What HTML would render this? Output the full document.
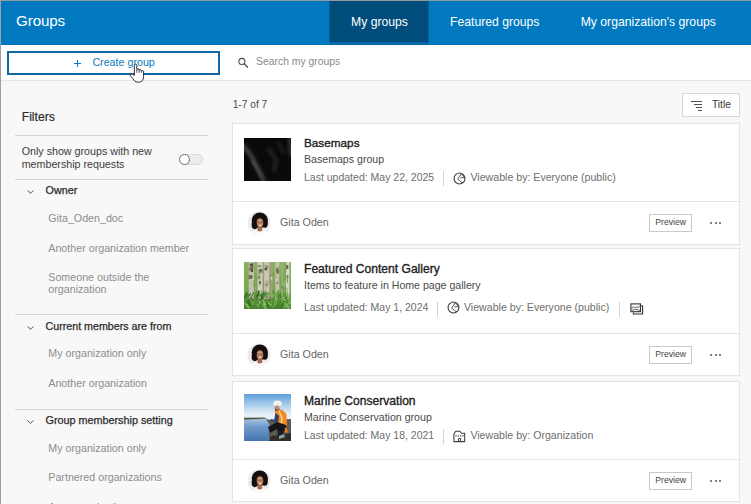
<!DOCTYPE html>
<html><head><meta charset="utf-8"><title>Groups</title>
<style>
*{box-sizing:border-box;margin:0;padding:0}
html,body{width:751px;height:504px;overflow:hidden;background:#f8f8f8}
#root{position:relative;width:751px;height:504px;overflow:hidden;background:#f8f8f8;font-family:"Liberation Sans",sans-serif}
.a{position:absolute;display:block}
.t{position:absolute;white-space:nowrap;line-height:1}
</style></head><body><div id="root">
<div class="a" style="left:0px;top:0px;width:751px;height:45px;background:#0079c1;"></div>
<div class="a" style="left:0px;top:44px;width:751px;height:1px;background:#0071b6;"></div>
<svg class="a" style="left:320px;top:0" width="120" height="45" viewBox="320 0 120 45"><rect x="329.4" y="0" width="99.1" height="42.2" fill="#004c7b"/><rect x="329.4" y="42.2" width="99.1" height="2.8" fill="#0068a9"/></svg>
<div class="a" style="left:0px;top:0px;width:751px;height:1px;background:#929ba2;"></div>
<div class="t" style="left:16px;top:13.13px;font-size:15.2px;color:#fff;letter-spacing:-0.12px;">Groups</div>
<div class="t" style="left:351px;top:15.67px;font-size:12.2px;color:#fff;">My groups</div>
<div class="t" style="left:450px;top:15.67px;font-size:12.2px;color:#fff;">Featured groups</div>
<div class="t" style="left:580.7px;top:15.67px;font-size:12.2px;color:#fff;">My organization's groups</div>
<div class="a" style="left:0px;top:45px;width:751px;height:35px;background:#fff;"></div>
<div class="a" style="left:0px;top:80px;width:751px;height:1px;background:#e6e6e6;"></div>
<div class="a" style="left:7px;top:51px;width:212.5px;height:24px;border:2px solid #1169a7;background:#fff"></div>
<div class="a" style="left:74px;top:63px;width:7px;height:1px;background:#0079c1;"></div>
<div class="a" style="left:77px;top:60px;width:1px;height:7px;background:#0079c1;"></div>
<div class="t" style="left:92.4px;top:56.84px;font-size:10.7px;color:#0a7ac2;">Create group</div>
<svg class="a" style="left:236px;top:56px" width="14" height="14" viewBox="236 56 14 14"><circle cx="241.9" cy="61.4" r="3.05" fill="none" stroke="#4a4a4a" stroke-width="1.05"/><path d="M244.2 63.8 L247.6 67.2" stroke="#4a4a4a" stroke-width="1.25" stroke-linecap="round"/></svg>
<div class="t" style="left:256px;top:56.80px;font-size:10.4px;color:#8a8a8a;">Search my groups</div>
<div class="t" style="left:21.7px;top:110.67px;font-size:12.2px;color:#2b2b2b;-webkit-text-stroke:0.2px #2b2b2b;">Filters</div>
<div class="a" style="left:15px;top:135px;width:193px;height:1px;background:#d6d6d6;"></div>
<div class="t" style="left:21.7px;top:146.34px;font-size:10.7px;color:#3c3c3c;">Only show groups with new</div>
<div class="t" style="left:21.7px;top:158.64px;font-size:10.7px;color:#3c3c3c;">membership requests</div>
<div class="a" style="left:179px;top:154px;width:24px;height:10.5px;border-radius:6px;background:#ececec;border:1px solid #d9d9d9"></div>
<div class="a" style="left:178.5px;top:153.5px;width:11.5px;height:11.5px;border-radius:6px;background:#fff;border:1.2px solid #6e6e6e"></div>
<div class="a" style="left:15px;top:179px;width:193px;height:1px;background:#d6d6d6;"></div>
<svg class="a" style="left:26px;top:189.3px" width="9" height="6" viewBox="0 0 9 6"><path d="M1.5 1.5 L4.5 4.3 L7.5 1.5" fill="none" stroke="#555" stroke-width="1"/></svg>
<div class="t" style="left:45.5px;top:185.36px;font-size:10.8px;color:#2b2b2b;-webkit-text-stroke:0.25px #2b2b2b;">Owner</div>
<div class="t" style="left:48.3px;top:213.34px;font-size:10.7px;color:#8d8d8d;">Gita_Oden_doc</div>
<div class="t" style="left:48.3px;top:243.24px;font-size:10.7px;color:#8d8d8d;">Another organization member</div>
<div class="t" style="left:48.3px;top:271.94px;font-size:10.7px;color:#8d8d8d;">Someone outside the</div>
<div class="t" style="left:48.3px;top:283.94px;font-size:10.7px;color:#8d8d8d;">organization</div>
<div class="a" style="left:15px;top:314px;width:193px;height:1px;background:#d6d6d6;"></div>
<svg class="a" style="left:26px;top:324.5px" width="9" height="6" viewBox="0 0 9 6"><path d="M1.5 1.5 L4.5 4.3 L7.5 1.5" fill="none" stroke="#555" stroke-width="1"/></svg>
<div class="t" style="left:45.5px;top:321.14px;font-size:10.7px;color:#2b2b2b;-webkit-text-stroke:0.25px #2b2b2b;">Current members are from</div>
<div class="t" style="left:48.3px;top:348.24px;font-size:10.7px;color:#8d8d8d;">My organization only</div>
<div class="t" style="left:48.3px;top:378.14px;font-size:10.7px;color:#8d8d8d;">Another organization</div>
<div class="a" style="left:15px;top:408.5px;width:193px;height:1px;background:#d6d6d6;"></div>
<svg class="a" style="left:26px;top:418.7px" width="9" height="6" viewBox="0 0 9 6"><path d="M1.5 1.5 L4.5 4.3 L7.5 1.5" fill="none" stroke="#555" stroke-width="1"/></svg>
<div class="t" style="left:45.5px;top:415.16px;font-size:10.8px;color:#2b2b2b;-webkit-text-stroke:0.25px #2b2b2b;">Group membership setting</div>
<div class="t" style="left:48.3px;top:442.64px;font-size:10.7px;color:#8d8d8d;">My organization only</div>
<div class="t" style="left:48.3px;top:471.94px;font-size:10.7px;color:#8d8d8d;">Partnered organizations</div>
<div class="t" style="left:48.3px;top:501.54px;font-size:10.7px;color:#8d8d8d;">Any organization</div>
<div class="t" style="left:232.7px;top:99.67px;font-size:10.2px;color:#4a4a4a;">1-7 of 7</div>
<div class="a" style="left:682px;top:93px;width:58px;height:23.5px;border:1px solid #d8d8d8;background:#fff"></div>
<div class="a" style="left:691px;top:100.5px;width:11px;height:1px;background:#4f4f4f;"></div>
<div class="a" style="left:694px;top:103.5px;width:8px;height:1px;background:#4f4f4f;"></div>
<div class="a" style="left:696.4px;top:106.5px;width:5.600000000000023px;height:1px;background:#4f4f4f;"></div>
<div class="a" style="left:698.3px;top:109.5px;width:3.7000000000000455px;height:1px;background:#4f4f4f;"></div>
<div class="t" style="left:712px;top:99.97px;font-size:10.2px;color:#333;">Title</div>
<div class="a" style="left:232px;top:123px;width:508px;height:122px;background:#fff;border:1px solid #e4e4e4;box-shadow:0 0 1px rgba(0,0,0,.05)"></div>
<div class="a" style="left:233px;top:201px;width:506px;height:1px;background:#e4e4e4;"></div>
<svg class="a" style="left:244px;top:138px" width="47" height="43" viewBox="0 0 47 43"><defs><filter id="f1" x="-20%" y="-20%" width="140%" height="140%"><feGaussianBlur stdDeviation="1.5"/></filter><filter id="f1b" x="-20%" y="-20%" width="140%" height="140%"><feGaussianBlur stdDeviation="0.8"/></filter><clipPath id="k1"><rect width="47" height="43"/></clipPath></defs><rect width="47" height="43" fill="#0a0a0a"/><g clip-path="url(#k1)" fill="none"><g filter="url(#f1)"><path d="M-1 7 L6 16 L12 27 L17 36 L20 44" stroke="#3d3d3d" stroke-width="4.5"/><path d="M45.5 -1 L46 8 L47 18" stroke="#383838" stroke-width="3"/><path d="M24 10 L32 22 L30 34" stroke="#1a1a1a" stroke-width="5"/><path d="M34 4 L40 16" stroke="#181818" stroke-width="4"/></g><g filter="url(#f1b)"><path d="M8 22 L13 31 L17 39" stroke="#575757" stroke-width="1.6"/><path d="M2 11 L7 19" stroke="#3a3a3a" stroke-width="1.2"/></g></g></svg>
<div class="t" style="left:304px;top:137.15px;font-size:11.75px;color:#222;-webkit-text-stroke:0.35px #222;">Basemaps</div>
<div class="t" style="left:304px;top:154.43px;font-size:10.6px;color:#4a4a4a;">Basemaps group</div>
<div class="t" style="left:304px;top:172.31px;font-size:10.5px;color:#6e6e6e;">Last updated: May 22, 2025</div>
<div class="a" style="left:443px;top:171px;width:1px;height:15px;background:#d2d2d2;"></div>
<svg class="a" style="left:452.5px;top:172.2px" width="13" height="13" viewBox="0 0 13 13"><circle cx="6.5" cy="6.5" r="5.45" fill="none" stroke="#3c3c3c" stroke-width="1.1"/><path d="M8.2 1.6 C7.2 3 7.4 3.6 6.6 4.6 C5.4 5.4 4.6 6.2 5.2 7.6 C5.8 8.8 7 8.6 7.6 9.4 C8 10.4 8.8 10.6 9.6 10.4 M8.2 1.6 C8.6 2.6 9.6 2.8 10 3.8 C10.8 4.2 11.4 4.6 11.6 5.2 M7.4 6 C8.6 5.4 10 5.6 11.6 6" fill="none" stroke="#3c3c3c" stroke-width="1"/></svg>
<div class="t" style="left:470.5px;top:172.23px;font-size:10.6px;color:#6e6e6e;">Viewable by: Everyone (public)</div>
<svg class="a" style="left:245.60000000000002px;top:209.5px" width="26" height="26" viewBox="-13 -13 26 26"><defs><clipPath id="c222"><circle r="11.2"/></clipPath><filter id="b222" x="-20%" y="-20%" width="140%" height="140%"><feGaussianBlur stdDeviation="0.55"/></filter></defs>
<circle r="11.5" fill="#ececec"/><g clip-path="url(#c222)" filter="url(#b222)">
<path d="M-8 12 C-7 7.4 -3 6.4 0.8 6.4 C4.6 6.4 8 7.4 9 12 Z" fill="#fafafa"/>
<ellipse cx="0.8" cy="-2.7" rx="8.1" ry="7.8" fill="#16110f"/>
<ellipse cx="-4.2" cy="1.6" rx="3.2" ry="4.6" fill="#16110f"/><ellipse cx="5.8" cy="0.6" rx="3" ry="4.2" fill="#16110f"/>
<path d="M-1.2 3.5 L-1.8 7.6 Q0.8 9.4 3.4 7.4 L2.8 3.5 Z" fill="#a36a4c"/>
<ellipse cx="1" cy="-0.3" rx="3.3" ry="4.5" fill="#b9825f"/>
<ellipse cx="0.6" cy="-2.2" rx="2.2" ry="1.5" fill="#cf9c7b"/>
<path d="M-1.6 -1 h2 M1.4 -1 h2" stroke="#4a362c" stroke-width="0.7"/>
<ellipse cx="1.1" cy="2.2" rx="1.4" ry="0.75" fill="#f3e6e0"/>
</g></svg>
<div class="t" style="left:280px;top:216.84px;font-size:10.7px;color:#666;">Gita Oden</div>
<div class="a" style="left:649px;top:214.0px;width:43px;height:17.5px;border:1px solid #c9c9c9;background:#fff"></div>
<div class="t" style="left:655.2px;top:217.74px;font-size:8.7px;color:#444;">Preview</div>
<div class="a" style="left:710.3px;top:221.9px;width:2.1px;height:2.1px;background:#555;border-radius:50%"></div>
<div class="a" style="left:714.8px;top:221.9px;width:2.1px;height:2.1px;background:#555;border-radius:50%"></div>
<div class="a" style="left:719.3px;top:221.9px;width:2.1px;height:2.1px;background:#555;border-radius:50%"></div>
<div class="a" style="left:232px;top:248px;width:508px;height:128px;background:#fff;border:1px solid #e4e4e4;box-shadow:0 0 1px rgba(0,0,0,.05)"></div>
<div class="a" style="left:233px;top:333px;width:506px;height:1px;background:#e4e4e4;"></div>
<svg class="a" style="left:244px;top:261.5px" width="47" height="47" viewBox="0 0 47 47"><defs><filter id="f2" x="-10%" y="-10%" width="120%" height="120%"><feGaussianBlur stdDeviation="0.6"/></filter><clipPath id="k2"><rect width="47" height="47"/></clipPath><linearGradient id="g2" x1="0" y1="0" x2="0" y2="1"><stop offset="0" stop-color="#86b65b"/><stop offset="0.62" stop-color="#74a54d"/><stop offset="0.74" stop-color="#568f39"/><stop offset="1" stop-color="#487f32"/></linearGradient></defs><rect width="47" height="47" fill="url(#g2)"/><g clip-path="url(#k2)"><g filter="url(#f2)"><rect x="4.8" y="-1" width="5.2" height="38" fill="#cbbcb3"/><rect x="5.5" y="15.4" width="3.7" height="2.9" fill="#e6dfd9" opacity="0.84"/><rect x="6.6" y="6.5" width="2.3" height="3.6" fill="#3f3029" opacity="0.68"/><rect x="5.8" y="4.8" width="3.6" height="2.8" fill="#6d5a4d" opacity="0.89"/><rect x="4.9" y="22.2" width="1.3" height="3.0" fill="#e6dfd9" opacity="0.53"/><rect x="6.8" y="1.2" width="2.7" height="3.8" fill="#6d5a4d" opacity="0.74"/><rect x="4.8" y="6.6" width="1.7" height="1.9" fill="#6d5a4d" opacity="0.76"/><rect x="4.9" y="13.8" width="3.7" height="2.9" fill="#7d6a5d" opacity="0.63"/><rect x="8.0" y="7.8" width="1.0" height="2.1" fill="#3f3029" opacity="0.84"/><rect x="4.8" y="13.1" width="3.4" height="4.1" fill="#6b574b" opacity="0.87"/><rect x="5.7" y="1.8" width="3.0" height="2.3" fill="#4a3a31" opacity="0.81"/><rect x="13.6" y="-1" width="5" height="38" fill="#d6ccc4"/><rect x="16.7" y="9.2" width="1.8" height="1.5" fill="#4a3a31" opacity="0.60"/><rect x="13.9" y="3.4" width="3.2" height="1.4" fill="#4a3a31" opacity="0.68"/><rect x="16.1" y="6.5" width="1.2" height="3.4" fill="#6d5a4d" opacity="0.67"/><rect x="14.7" y="7.2" width="3.7" height="2.0" fill="#3f3029" opacity="0.58"/><rect x="13.8" y="13.4" width="2.7" height="3.8" fill="#6b574b" opacity="0.59"/><rect x="14.6" y="8.8" width="1.8" height="3.5" fill="#3f3029" opacity="0.54"/><rect x="14.5" y="19.8" width="2.6" height="1.9" fill="#8a7a6c" opacity="0.55"/><rect x="15.1" y="20.0" width="1.2" height="3.7" fill="#a08f82" opacity="0.56"/><rect x="14.3" y="30.9" width="1.5" height="3.7" fill="#a08f82" opacity="0.75"/><rect x="15.1" y="18.8" width="1.9" height="3.3" fill="#5b473c" opacity="0.67"/><rect x="20.2" y="-1" width="5" height="38" fill="#d2c4bd"/><rect x="20.5" y="3.5" width="3.6" height="1.3" fill="#6d5a4d" opacity="0.60"/><rect x="20.8" y="28.0" width="1.7" height="3.0" fill="#a08f82" opacity="0.89"/><rect x="21.6" y="4.3" width="2.7" height="2.6" fill="#5b473c" opacity="0.58"/><rect x="21.8" y="31.1" width="1.0" height="3.4" fill="#6b574b" opacity="0.52"/><rect x="20.5" y="6.0" width="2.5" height="2.3" fill="#4a3a31" opacity="0.86"/><rect x="21.5" y="33.3" width="2.8" height="3.2" fill="#6b574b" opacity="0.74"/><rect x="21.2" y="31.4" width="1.9" height="2.6" fill="#5b473c" opacity="0.51"/><rect x="20.9" y="21.6" width="3.0" height="2.6" fill="#5b473c" opacity="0.53"/><rect x="21.3" y="18.6" width="3.5" height="3.4" fill="#a08f82" opacity="0.55"/><rect x="22.1" y="32.8" width="1.1" height="2.2" fill="#5b473c" opacity="0.85"/><rect x="26.6" y="-1" width="1.9" height="38" fill="#a89b8a"/><rect x="26.9" y="14.2" width="1.3" height="3.6" fill="#e6dfd9" opacity="0.76"/><rect x="26.7" y="12.9" width="0.8" height="1.2" fill="#5b473c" opacity="0.90"/><rect x="27.2" y="29.9" width="1.0" height="3.4" fill="#e6dfd9" opacity="0.68"/><rect x="31.4" y="-1" width="4" height="38" fill="#c9beb1"/><rect x="32.5" y="15.7" width="1.9" height="2.8" fill="#7d6a5d" opacity="0.74"/><rect x="32.2" y="16.4" width="2.3" height="1.9" fill="#e6dfd9" opacity="0.76"/><rect x="31.7" y="16.5" width="1.6" height="3.9" fill="#e6dfd9" opacity="0.58"/><rect x="32.2" y="5.8" width="2.3" height="3.9" fill="#5b473c" opacity="0.66"/><rect x="32.5" y="8.5" width="2.6" height="3.1" fill="#4a3a31" opacity="0.65"/><rect x="32.8" y="19.8" width="1.1" height="2.1" fill="#5b473c" opacity="0.78"/><rect x="32.7" y="32.3" width="1.2" height="2.0" fill="#7d6a5d" opacity="0.87"/><rect x="32.8" y="28.3" width="1.9" height="2.3" fill="#a08f82" opacity="0.84"/><rect x="37.5" y="-1" width="1.2" height="38" fill="#a7ad8c"/><rect x="37.5" y="33.4" width="0.8" height="2.6" fill="#e6dfd9" opacity="0.52"/><rect x="37.8" y="24.1" width="0.8" height="2.9" fill="#5b473c" opacity="0.76"/><rect x="42" y="-1" width="3.4" height="38" fill="#ddd6d0"/><rect x="42.3" y="13.8" width="2.1" height="1.8" fill="#6b574b" opacity="0.82"/><rect x="43.3" y="33.5" width="1.0" height="1.5" fill="#a08f82" opacity="0.82"/><rect x="43.1" y="32.6" width="1.1" height="3.3" fill="#6b574b" opacity="0.79"/><rect x="42.6" y="25.7" width="0.9" height="2.8" fill="#7d6a5d" opacity="0.72"/><rect x="42.1" y="32.2" width="2.5" height="2.7" fill="#a08f82" opacity="0.86"/><rect x="42.2" y="3.0" width="2.1" height="4.0" fill="#4a3a31" opacity="0.75"/><rect x="42.8" y="12.8" width="1.3" height="8.1" fill="#66983f" opacity="0.83"/><rect x="21.8" y="22.1" width="0.8" height="4.8" fill="#8fc060" opacity="0.81"/><rect x="46.1" y="33.2" width="0.8" height="7.8" fill="#74a64a" opacity="0.74"/><rect x="0.7" y="17.2" width="1.1" height="3.3" fill="#74a64a" opacity="0.76"/><rect x="22.9" y="1.0" width="1.0" height="10.3" fill="#8fc060" opacity="0.46"/><rect x="25.1" y="23.3" width="0.7" height="11.2" fill="#9ac76c" opacity="0.66"/><rect x="34.0" y="28.6" width="1.1" height="9.2" fill="#9ac76c" opacity="0.73"/><rect x="35.6" y="14.9" width="1.2" height="8.0" fill="#66983f" opacity="0.66"/><rect x="39.7" y="19.0" width="1.5" height="5.8" fill="#9ac76c" opacity="0.80"/><rect x="28.6" y="10.4" width="1.1" height="4.3" fill="#66983f" opacity="0.68"/><rect x="9.4" y="18.2" width="0.9" height="7.5" fill="#66983f" opacity="0.67"/><rect x="2.1" y="31.2" width="0.7" height="7.9" fill="#66983f" opacity="0.49"/><rect x="7.8" y="31.6" width="0.8" height="7.1" fill="#9ac76c" opacity="0.64"/><rect x="6.0" y="14.7" width="1.1" height="10.3" fill="#9ac76c" opacity="0.49"/><rect x="19.7" y="1.0" width="0.6" height="5.3" fill="#8fc060" opacity="0.51"/><rect x="0.6" y="9.7" width="1.2" height="9.5" fill="#82b554" opacity="0.49"/><rect x="34.4" y="4.2" width="1.2" height="7.6" fill="#74a64a" opacity="0.73"/><rect x="41.3" y="0.8" width="1.2" height="8.7" fill="#66983f" opacity="0.67"/><rect x="40.6" y="18.2" width="1.4" height="5.0" fill="#82b554" opacity="0.69"/><rect x="40.3" y="7.9" width="1.4" height="9.7" fill="#74a64a" opacity="0.58"/><rect x="14.8" y="31.4" width="1.4" height="5.0" fill="#82b554" opacity="0.50"/><rect x="11.2" y="24.7" width="1.0" height="5.3" fill="#8fc060" opacity="0.83"/><rect x="25.5" y="24.0" width="0.7" height="4.8" fill="#8fc060" opacity="0.68"/><rect x="16.8" y="27.9" width="1.2" height="6.3" fill="#66983f" opacity="0.59"/><path d="M46.9 44.5 l-0.1 -4.4" stroke="#66a645" stroke-width="1.9" stroke-linecap="round"/><path d="M28.4 45.6 l-2.1 -3.9" stroke="#5d9f3e" stroke-width="1.2" stroke-linecap="round"/><path d="M39.3 46.9 l0.5 -4.1" stroke="#66a645" stroke-width="1.8" stroke-linecap="round"/><path d="M2.7 33.5 l-0.2 -3.0" stroke="#376b27" stroke-width="1.5" stroke-linecap="round"/><path d="M27.8 32.2 l2.1 -4.0" stroke="#57983a" stroke-width="1.5" stroke-linecap="round"/><path d="M34.5 38.1 l0.6 -4.2" stroke="#7ab552" stroke-width="2.0" stroke-linecap="round"/><path d="M14.5 33.3 l0.4 -3.9" stroke="#376b27" stroke-width="1.7" stroke-linecap="round"/><path d="M15.4 43.4 l2.5 -2.3" stroke="#3c7429" stroke-width="1.9" stroke-linecap="round"/><path d="M38.1 38.1 l2.3 -2.4" stroke="#88c060" stroke-width="1.9" stroke-linecap="round"/><path d="M35.7 38.1 l-2.6 -3.5" stroke="#4a8732" stroke-width="1.6" stroke-linecap="round"/><path d="M-0.5 37.3 l-1.6 -1.7" stroke="#57983a" stroke-width="1.8" stroke-linecap="round"/><path d="M15.2 41.9 l0.2 -3.3" stroke="#4a8732" stroke-width="2.2" stroke-linecap="round"/><path d="M29.8 42.5 l2.9 -4.4" stroke="#376b27" stroke-width="1.7" stroke-linecap="round"/><path d="M34.5 35.8 l0.0 -2.2" stroke="#376b27" stroke-width="1.8" stroke-linecap="round"/><path d="M-0.5 35.9 l2.4 -2.8" stroke="#3c7429" stroke-width="1.6" stroke-linecap="round"/><path d="M45.4 40.5 l0.8 -2.1" stroke="#66a645" stroke-width="1.1" stroke-linecap="round"/><path d="M27.7 43.4 l-0.7 -1.7" stroke="#57983a" stroke-width="1.5" stroke-linecap="round"/><path d="M45.6 44.8 l-0.4 -3.0" stroke="#57983a" stroke-width="1.3" stroke-linecap="round"/><path d="M18.1 36.7 l-0.1 -3.7" stroke="#3c7429" stroke-width="2.1" stroke-linecap="round"/><path d="M30.9 43.2 l-2.9 -3.8" stroke="#57983a" stroke-width="1.1" stroke-linecap="round"/><path d="M6.5 43.3 l-2.7 -3.6" stroke="#376b27" stroke-width="1.5" stroke-linecap="round"/><path d="M26.9 42.8 l-2.6 -1.8" stroke="#88c060" stroke-width="1.5" stroke-linecap="round"/><path d="M21.9 46.6 l-2.7 -4.2" stroke="#7ab552" stroke-width="2.0" stroke-linecap="round"/><path d="M42.7 34.2 l0.6 -4.2" stroke="#7ab552" stroke-width="1.7" stroke-linecap="round"/><path d="M20.9 35.1 l-0.9 -4.0" stroke="#57983a" stroke-width="1.4" stroke-linecap="round"/><path d="M5.7 38.3 l0.8 -2.5" stroke="#3c7429" stroke-width="1.4" stroke-linecap="round"/><path d="M34.7 44.2 l2.7 -2.3" stroke="#4a8732" stroke-width="1.3" stroke-linecap="round"/><path d="M4.5 45.4 l-1.4 -2.7" stroke="#88c060" stroke-width="1.9" stroke-linecap="round"/><path d="M32.6 34.9 l1.5 -3.9" stroke="#3c7429" stroke-width="1.3" stroke-linecap="round"/><path d="M46.0 45.7 l0.8 -4.5" stroke="#57983a" stroke-width="1.3" stroke-linecap="round"/><path d="M0.3 32.6 l0.2 -4.3" stroke="#7ab552" stroke-width="1.1" stroke-linecap="round"/><path d="M31.5 40.3 l-0.1 -3.4" stroke="#88c060" stroke-width="1.4" stroke-linecap="round"/><path d="M22.7 34.0 l1.8 -3.2" stroke="#66a645" stroke-width="2.0" stroke-linecap="round"/><path d="M39.2 43.5 l-0.5 -3.7" stroke="#5d9f3e" stroke-width="2.0" stroke-linecap="round"/><path d="M16.7 41.8 l-1.3 -2.2" stroke="#88c060" stroke-width="2.0" stroke-linecap="round"/><path d="M7.8 41.8 l-0.2 -3.5" stroke="#66a645" stroke-width="1.7" stroke-linecap="round"/><path d="M19.7 40.5 l-1.2 -2.2" stroke="#5d9f3e" stroke-width="1.1" stroke-linecap="round"/><path d="M9.2 41.9 l1.2 -3.0" stroke="#66a645" stroke-width="1.9" stroke-linecap="round"/><path d="M14.7 45.2 l-0.9 -2.3" stroke="#7ab552" stroke-width="1.4" stroke-linecap="round"/><path d="M4.6 42.6 l-0.4 -2.1" stroke="#3c7429" stroke-width="1.4" stroke-linecap="round"/><path d="M14.2 38.0 l-2.5 -2.0" stroke="#7ab552" stroke-width="1.0" stroke-linecap="round"/><path d="M31.5 40.8 l1.4 -3.4" stroke="#7ab552" stroke-width="1.5" stroke-linecap="round"/><path d="M6.4 40.9 l-1.9 -2.2" stroke="#4a8732" stroke-width="2.1" stroke-linecap="round"/><path d="M12.5 32.3 l0.3 -2.8" stroke="#57983a" stroke-width="2.2" stroke-linecap="round"/><path d="M30.3 44.1 l0.5 -3.6" stroke="#66a645" stroke-width="1.7" stroke-linecap="round"/><path d="M15.1 36.1 l2.4 -4.2" stroke="#66a645" stroke-width="1.8" stroke-linecap="round"/><path d="M5.9 43.2 l-1.5 -3.8" stroke="#376b27" stroke-width="1.9" stroke-linecap="round"/><path d="M24.0 43.5 l-0.9 -2.1" stroke="#376b27" stroke-width="1.4" stroke-linecap="round"/><path d="M5.6 39.3 l1.2 -1.8" stroke="#66a645" stroke-width="1.5" stroke-linecap="round"/><path d="M38.7 42.0 l1.8 -2.0" stroke="#57983a" stroke-width="2.1" stroke-linecap="round"/><path d="M45.0 41.6 l1.3 -2.1" stroke="#88c060" stroke-width="1.5" stroke-linecap="round"/><path d="M19.2 34.2 l2.9 -3.4" stroke="#4a8732" stroke-width="1.2" stroke-linecap="round"/><path d="M8.8 38.4 l-1.4 -1.8" stroke="#3c7429" stroke-width="1.6" stroke-linecap="round"/><path d="M34.1 36.6 l1.7 -4.0" stroke="#4a8732" stroke-width="1.1" stroke-linecap="round"/><path d="M21.0 40.8 l-1.1 -3.9" stroke="#57983a" stroke-width="1.4" stroke-linecap="round"/><path d="M27.2 41.0 l0.6 -3.8" stroke="#5d9f3e" stroke-width="1.2" stroke-linecap="round"/><path d="M12.5 34.6 l0.8 -1.7" stroke="#3c7429" stroke-width="1.7" stroke-linecap="round"/><path d="M40.0 39.3 l2.5 -3.5" stroke="#376b27" stroke-width="1.7" stroke-linecap="round"/><path d="M44.9 39.2 l-0.6 -3.8" stroke="#7ab552" stroke-width="1.2" stroke-linecap="round"/><path d="M37.3 46.6 l1.7 -4.3" stroke="#3c7429" stroke-width="2.1" stroke-linecap="round"/><path d="M41.8 45.1 l-0.3 -3.8" stroke="#88c060" stroke-width="1.5" stroke-linecap="round"/><path d="M41.0 38.2 l-2.1 -1.8" stroke="#88c060" stroke-width="2.0" stroke-linecap="round"/><path d="M5.3 43.1 l0.1 -4.3" stroke="#3c7429" stroke-width="1.7" stroke-linecap="round"/><path d="M7.6 35.1 l1.9 -4.3" stroke="#4a8732" stroke-width="1.3" stroke-linecap="round"/><path d="M33.4 33.5 l1.2 -4.3" stroke="#5d9f3e" stroke-width="1.9" stroke-linecap="round"/><path d="M25.1 39.6 l1.7 -3.2" stroke="#57983a" stroke-width="2.1" stroke-linecap="round"/><path d="M3.4 44.4 l-2.8 -3.3" stroke="#7ab552" stroke-width="1.6" stroke-linecap="round"/><path d="M44.4 46.5 l-1.1 -4.3" stroke="#88c060" stroke-width="1.4" stroke-linecap="round"/><path d="M21.4 42.7 l-2.6 -4.1" stroke="#88c060" stroke-width="1.8" stroke-linecap="round"/><path d="M31.4 43.2 l0.9 -4.5" stroke="#66a645" stroke-width="1.5" stroke-linecap="round"/><path d="M33.1 35.6 l-0.3 -4.5" stroke="#66a645" stroke-width="2.2" stroke-linecap="round"/><path d="M37.4 35.1 l-1.3 -3.4" stroke="#4a8732" stroke-width="1.6" stroke-linecap="round"/><path d="M13.3 37.1 l0.3 -4.2" stroke="#376b27" stroke-width="1.2" stroke-linecap="round"/><path d="M17.1 33.6 l2.7 -2.8" stroke="#3c7429" stroke-width="1.9" stroke-linecap="round"/><path d="M14.9 44.4 l-2.4 -2.6" stroke="#66a645" stroke-width="1.2" stroke-linecap="round"/><path d="M29.3 34.7 l-0.6 -2.0" stroke="#7ab552" stroke-width="1.7" stroke-linecap="round"/><path d="M3.3 35.4 l2.9 -3.2" stroke="#4a8732" stroke-width="1.9" stroke-linecap="round"/><path d="M15.4 44.3 l0.9 -2.2" stroke="#4a8732" stroke-width="2.0" stroke-linecap="round"/><path d="M17.5 37.0 l0.7 -2.3" stroke="#376b27" stroke-width="1.7" stroke-linecap="round"/><path d="M14.2 43.8 l1.0 -2.7" stroke="#7ab552" stroke-width="1.0" stroke-linecap="round"/><path d="M16.2 39.1 l0.6 -2.8" stroke="#6b4a32" stroke-width="0.8"/><path d="M18.2 40.6 l1.2 -1.3" stroke="#6b4a32" stroke-width="0.8"/><path d="M28.3 37.4 l1.1 -1.2" stroke="#6b4a32" stroke-width="0.8"/><path d="M25.6 39.2 l0.0 -2.7" stroke="#6b4a32" stroke-width="0.8"/><path d="M32.7 44.9 l0.1 -1.6" stroke="#6b4a32" stroke-width="0.8"/><path d="M37.9 37.8 l1.8 -1.7" stroke="#6b4a32" stroke-width="0.8"/><path d="M10.5 36.7 l-1.0 -1.8" stroke="#6b4a32" stroke-width="0.8"/></g></g></svg>
<div class="t" style="left:304px;top:262.56px;font-size:12.1px;color:#222;-webkit-text-stroke:0.35px #222;">Featured Content Gallery</div>
<div class="t" style="left:304px;top:280.43px;font-size:10.6px;color:#4a4a4a;">Items to feature in Home page gallery</div>
<div class="t" style="left:304px;top:302.01px;font-size:10.5px;color:#6e6e6e;">Last updated: May 1, 2024</div>
<div class="a" style="left:436.7px;top:301.5px;width:1px;height:15px;background:#d2d2d2;"></div>
<svg class="a" style="left:446.6px;top:301.2px" width="13" height="13" viewBox="0 0 13 13"><circle cx="6.5" cy="6.5" r="5.45" fill="none" stroke="#3c3c3c" stroke-width="1.1"/><path d="M8.2 1.6 C7.2 3 7.4 3.6 6.6 4.6 C5.4 5.4 4.6 6.2 5.2 7.6 C5.8 8.8 7 8.6 7.6 9.4 C8 10.4 8.8 10.6 9.6 10.4 M8.2 1.6 C8.6 2.6 9.6 2.8 10 3.8 C10.8 4.2 11.4 4.6 11.6 5.2 M7.4 6 C8.6 5.4 10 5.6 11.6 6" fill="none" stroke="#3c3c3c" stroke-width="1"/></svg>
<div class="t" style="left:464px;top:301.93px;font-size:10.6px;color:#6e6e6e;">Viewable by: Everyone (public)</div>
<div class="a" style="left:619px;top:301.5px;width:1px;height:15px;background:#d2d2d2;"></div>
<svg class="a" style="left:630.4px;top:302.59999999999997px" width="14" height="13" viewBox="0 0 14 13"><path d="M11.2 2.8 H12.6 V11 H3.4 V9.4" fill="none" stroke="#333" stroke-width="1.1"/><rect x="0.9" y="0.9" width="9.6" height="7.8" fill="#fff" stroke="#333" stroke-width="1.1"/><path d="M1.2 6.2 L3.6 3.6 L5.4 5 L7 3.8 L8.2 4.6 L10 2.6 M1.6 8 C3.4 6 7.8 6 10 8" fill="none" stroke="#444" stroke-width="0.9"/></svg>
<svg class="a" style="left:245.60000000000002px;top:341.5px" width="26" height="26" viewBox="-13 -13 26 26"><defs><clipPath id="c354"><circle r="11.2"/></clipPath><filter id="b354" x="-20%" y="-20%" width="140%" height="140%"><feGaussianBlur stdDeviation="0.55"/></filter></defs>
<circle r="11.5" fill="#ececec"/><g clip-path="url(#c354)" filter="url(#b354)">
<path d="M-8 12 C-7 7.4 -3 6.4 0.8 6.4 C4.6 6.4 8 7.4 9 12 Z" fill="#fafafa"/>
<ellipse cx="0.8" cy="-2.7" rx="8.1" ry="7.8" fill="#16110f"/>
<ellipse cx="-4.2" cy="1.6" rx="3.2" ry="4.6" fill="#16110f"/><ellipse cx="5.8" cy="0.6" rx="3" ry="4.2" fill="#16110f"/>
<path d="M-1.2 3.5 L-1.8 7.6 Q0.8 9.4 3.4 7.4 L2.8 3.5 Z" fill="#a36a4c"/>
<ellipse cx="1" cy="-0.3" rx="3.3" ry="4.5" fill="#b9825f"/>
<ellipse cx="0.6" cy="-2.2" rx="2.2" ry="1.5" fill="#cf9c7b"/>
<path d="M-1.6 -1 h2 M1.4 -1 h2" stroke="#4a362c" stroke-width="0.7"/>
<ellipse cx="1.1" cy="2.2" rx="1.4" ry="0.75" fill="#f3e6e0"/>
</g></svg>
<div class="t" style="left:280px;top:348.84px;font-size:10.7px;color:#666;">Gita Oden</div>
<div class="a" style="left:649px;top:346.0px;width:43px;height:17.5px;border:1px solid #c9c9c9;background:#fff"></div>
<div class="t" style="left:655.2px;top:349.74px;font-size:8.7px;color:#444;">Preview</div>
<div class="a" style="left:710.3px;top:353.9px;width:2.1px;height:2.1px;background:#555;border-radius:50%"></div>
<div class="a" style="left:714.8px;top:353.9px;width:2.1px;height:2.1px;background:#555;border-radius:50%"></div>
<div class="a" style="left:719.3px;top:353.9px;width:2.1px;height:2.1px;background:#555;border-radius:50%"></div>
<div class="a" style="left:232px;top:381px;width:508px;height:121px;background:#fff;border:1px solid #e4e4e4;box-shadow:0 0 1px rgba(0,0,0,.05)"></div>
<div class="a" style="left:233px;top:459px;width:506px;height:1px;background:#e4e4e4;"></div>
<svg class="a" style="left:244px;top:393.5px" width="47" height="47" viewBox="0 0 47 47"><defs><filter id="f3"><feGaussianBlur stdDeviation="0.45"/></filter><linearGradient id="g3" x1="0" y1="0" x2="0" y2="1"><stop offset="0" stop-color="#5f9fda"/><stop offset="0.5" stop-color="#b4d3ee"/><stop offset="0.8" stop-color="#e4eef7"/><stop offset="1" stop-color="#eef3f8"/></linearGradient><linearGradient id="w3" x1="0" y1="0" x2="0" y2="1"><stop offset="0" stop-color="#a9c3de"/><stop offset="0.35" stop-color="#6f9acb"/><stop offset="1" stop-color="#4674ad"/></linearGradient></defs>
<rect width="47" height="25" fill="url(#g3)"/><rect y="25" width="47" height="22" fill="url(#w3)"/>
<g filter="url(#f3)"><path d="M0 23.8 L20 23.4 L24 24.6 L0 25.8 Z" fill="#4e5b46"/>
<path d="M22 25.6 L30 26.6 L47 25 V47 H26 L24.5 41 L27 33 L24 28 Z" fill="#5d5b52"/>
<path d="M25.5 47 L26.5 42 L36 41 L47 39 V47 Z" fill="#2e2d25"/>
<ellipse cx="33.5" cy="9.5" rx="4.2" ry="3" fill="#f4f4f2"/><rect x="29.3" y="10.3" width="9" height="1.5" rx="0.7" fill="#e8e8e6"/>
<ellipse cx="33" cy="14" rx="2.4" ry="2.6" fill="#b9876a"/><path d="M31 14.5 q2 3 4.4 0 v2.5 h-4.4z" fill="#5a3f30"/>
<path d="M31 17 L38 15.5 L42.5 20 L43 32 L36 33 L31 27 Z" fill="#f08a24"/>
<path d="M35 17 L38 24 L37 31" stroke="#f2e9a0" stroke-width="1.2" fill="none"/>
<path d="M31.5 19 L30 27 L34 29 L35 22 Z" fill="#2f3f66"/>
<path d="M24 21.5 l5 1.6 l-0.6 2.2 l-5 -1.6 z" fill="#e9eef6"/><path d="M27 25 l6 1.5 l-1 2 l-6 -1.5z" fill="#3a4a74"/>
<path d="M24 33 L33 28 L42 31 L43 37 L36 38 L33 35 L26 39 Z" fill="#15171c"/>
<path d="M33 35 L40 38 L38 44 L34 43 Z" fill="#1b1d22"/><path d="M35 42 l5 -2 l1 3 l-6 2z" fill="#9aa0a8"/>
<path d="M41 33 q3 1 2.5 6 l-3 -1z" fill="#ee7a18"/>
</g></svg>
<div class="t" style="left:304px;top:394.56px;font-size:12.1px;color:#222;-webkit-text-stroke:0.35px #222;">Marine Conservation</div>
<div class="t" style="left:304px;top:412.43px;font-size:10.6px;color:#4a4a4a;">Marine Conservation group</div>
<div class="t" style="left:304px;top:429.71px;font-size:10.5px;color:#6e6e6e;">Last updated: May 18, 2021</div>
<div class="a" style="left:443px;top:429px;width:1px;height:15px;background:#d2d2d2;"></div>
<svg class="a" style="left:453px;top:430px" width="13" height="13" viewBox="0 0 13 13"><path d="M0.9 11.6 V4.2 L2.6 1.3 H7 L8.3 3.2 H11.7 V11.6 Z" fill="none" stroke="#3c3c3c" stroke-width="1.05" stroke-linejoin="round"/><path d="M2.4 5.9h1.2M4.8 5.9h1.2M7.2 5.9h1.2M9.4 5.9h1.2" stroke="#3c3c3c" stroke-width="1.4"/><path d="M5.5 11.6 V8.5 H7.6 V11.6" fill="none" stroke="#3c3c3c" stroke-width="1"/></svg>
<div class="t" style="left:470.4px;top:429.63px;font-size:10.6px;color:#6e6e6e;">Viewable by: Organization</div>
<svg class="a" style="left:245.60000000000002px;top:467.5px" width="26" height="26" viewBox="-13 -13 26 26"><defs><clipPath id="c480"><circle r="11.2"/></clipPath><filter id="b480" x="-20%" y="-20%" width="140%" height="140%"><feGaussianBlur stdDeviation="0.55"/></filter></defs>
<circle r="11.5" fill="#ececec"/><g clip-path="url(#c480)" filter="url(#b480)">
<path d="M-8 12 C-7 7.4 -3 6.4 0.8 6.4 C4.6 6.4 8 7.4 9 12 Z" fill="#fafafa"/>
<ellipse cx="0.8" cy="-2.7" rx="8.1" ry="7.8" fill="#16110f"/>
<ellipse cx="-4.2" cy="1.6" rx="3.2" ry="4.6" fill="#16110f"/><ellipse cx="5.8" cy="0.6" rx="3" ry="4.2" fill="#16110f"/>
<path d="M-1.2 3.5 L-1.8 7.6 Q0.8 9.4 3.4 7.4 L2.8 3.5 Z" fill="#a36a4c"/>
<ellipse cx="1" cy="-0.3" rx="3.3" ry="4.5" fill="#b9825f"/>
<ellipse cx="0.6" cy="-2.2" rx="2.2" ry="1.5" fill="#cf9c7b"/>
<path d="M-1.6 -1 h2 M1.4 -1 h2" stroke="#4a362c" stroke-width="0.7"/>
<ellipse cx="1.1" cy="2.2" rx="1.4" ry="0.75" fill="#f3e6e0"/>
</g></svg>
<div class="t" style="left:280px;top:474.84px;font-size:10.7px;color:#666;">Gita Oden</div>
<div class="a" style="left:649px;top:472.0px;width:43px;height:17.5px;border:1px solid #c9c9c9;background:#fff"></div>
<div class="t" style="left:655.2px;top:475.74px;font-size:8.7px;color:#444;">Preview</div>
<div class="a" style="left:710.3px;top:479.9px;width:2.1px;height:2.1px;background:#555;border-radius:50%"></div>
<div class="a" style="left:714.8px;top:479.9px;width:2.1px;height:2.1px;background:#555;border-radius:50%"></div>
<div class="a" style="left:719.3px;top:479.9px;width:2.1px;height:2.1px;background:#555;border-radius:50%"></div>
<svg class="a" style="left:126px;top:60px;z-index:20" width="22" height="26" viewBox="126 60 22 26"><path d="M134.3 65.6 Q134.3 64.2 135.55 64.2 Q136.8 64.2 136.8 65.6 L136.8 69.3 Q137.9 68.5 139.05 69.3 L139.05 70 Q140.2 69.3 141.3 70.1 L141.3 70.9 Q142.5 70.3 143.6 71.2 L143.6 76.5 C143.6 80.4 141.2 82.2 138.4 82.2 C135.8 82.2 134 80.8 132.6 78.2 L130.3 75.6 Q129.7 74.3 131 74 Q132.4 73.8 134.3 75.4 Z" fill="#fff" stroke="#26283a" stroke-width="1" stroke-linejoin="round"/><path d="M136.8 69.3 V72.8 M139.05 70 V72.8 M141.3 70.9 V72.8" stroke="#26283a" stroke-width="0.8"/></svg>
<div class="a" style="left:0px;top:0px;width:1px;height:504px;background:#9f9f9f;z-index:30"></div>
</div></body></html>
